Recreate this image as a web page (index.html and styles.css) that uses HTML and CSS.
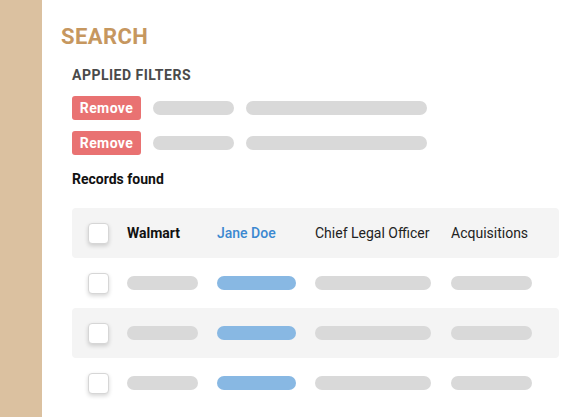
FILE: index.html
```html
<!DOCTYPE html>
<html>
<head>
<meta charset="utf-8">
<link rel="stylesheet" href="styles.css">
</head>
<body>
<div class="page">
  <aside class="sidebar"></aside>
  <main class="main">
    <h1 class="title">SEARCH</h1>
    <div class="content">
      <h2 class="subtitle">APPLIED FILTERS</h2>
      <div class="filters">
        <div class="filter">
          <button class="remove">Remove</button>
          <span class="bar bar-a"></span>
          <span class="bar bar-b"></span>
        </div>
        <div class="filter">
          <button class="remove">Remove</button>
          <span class="bar bar-a"></span>
          <span class="bar bar-b"></span>
        </div>
      </div>
      <div class="records">Records found</div>
      <div class="table">
        <div class="row shaded">
          <span class="check"></span>
          <span class="cell c1 strong">Walmart</span>
          <span class="cell c2 link">Jane Doe</span>
          <span class="cell c3">Chief Legal Officer</span>
          <span class="cell c4">Acquisitions</span>
        </div>
        <div class="row">
          <span class="check"></span>
          <span class="cell c1"><span class="bar w1"></span></span>
          <span class="cell c2"><span class="bar blue w2"></span></span>
          <span class="cell c3"><span class="bar w3"></span></span>
          <span class="cell c4"><span class="bar w4"></span></span>
        </div>
        <div class="row shaded">
          <span class="check"></span>
          <span class="cell c1"><span class="bar w1"></span></span>
          <span class="cell c2"><span class="bar blue w2"></span></span>
          <span class="cell c3"><span class="bar w3"></span></span>
          <span class="cell c4"><span class="bar w4"></span></span>
        </div>
        <div class="row">
          <span class="check"></span>
          <span class="cell c1"><span class="bar w1"></span></span>
          <span class="cell c2"><span class="bar blue w2"></span></span>
          <span class="cell c3"><span class="bar w3"></span></span>
          <span class="cell c4"><span class="bar w4"></span></span>
        </div>
      </div>
    </div>
  </main>
</div>
</body>
</html>
```
FILE: styles.css
```css
* { box-sizing: border-box; }
html, body { margin: 0; padding: 0; background: #fff; }
body { font-family: Roboto, "Liberation Sans", sans-serif; color: #222; }
.page { display: flex; width: 580px; height: 417px; overflow: hidden; }
.sidebar { width: 42px; flex: none; background: #dbc1a0; }
.main { flex: 1; padding: 24px 0 0 19px; }
.title {
  margin: 0;
  font-size: 22px;
  line-height: 26px;
  font-weight: 700;
  color: #c6975f;
  letter-spacing: 0.4px;
}
.content { padding-left: 11px; }
.subtitle {
  margin: 17px 0 0 0;
  font-size: 14px;
  line-height: 16px;
  font-weight: 700;
  color: #4a4a4a;
  letter-spacing: 0.5px;
}
.filters { margin-top: 13px; display: flex; flex-direction: column; gap: 11px; }
.filter { display: flex; align-items: center; gap: 12px; }
.remove {
  width: 69px;
  height: 24px;
  border: none;
  border-radius: 3px;
  background: #e97272;
  color: #fff;
  font-family: Roboto, "Liberation Sans", sans-serif;
  font-size: 14px;
  font-weight: 700;
  letter-spacing: 0.4px;
  padding: 0;
}
.bar { display: block; height: 14px; border-radius: 7px; background: #d9d9d9; }
.bar-a { width: 81px; }
.bar-b { width: 181px; }
.records {
  margin-top: 16px;
  font-size: 14px;
  line-height: 16px;
  font-weight: 700;
  color: #111;
}
.table { margin-top: 21px; width: 487px; }
.row {
  display: flex;
  align-items: center;
  height: 50px;
  padding-left: 16px;
  border-radius: 4px;
}
.row.shaded { background: #f4f4f4; }
.check {
  width: 21px;
  height: 21px;
  flex: none;
  margin-right: 18px;
  background: #fff;
  border: 1px solid #d6d6d6;
  border-radius: 4px;
  box-shadow: 0 2px 4px rgba(0,0,0,0.16);
}
.cell { font-size: 14px; line-height: 16px; color: #222; flex: none; }
.c1 { width: 90px; }
.c2 { width: 98px; }
.c3 { width: 136px; }
.c4 { width: 100px; }
.strong { font-weight: 700; color: #111; }
.link { color: #3b88d0; font-weight: 500; }
.bar.blue { background: #88b8e3; }
.w1 { width: 71px; }
.w2 { width: 79px; }
.w3 { width: 116px; }
.w4 { width: 81px; }
```
